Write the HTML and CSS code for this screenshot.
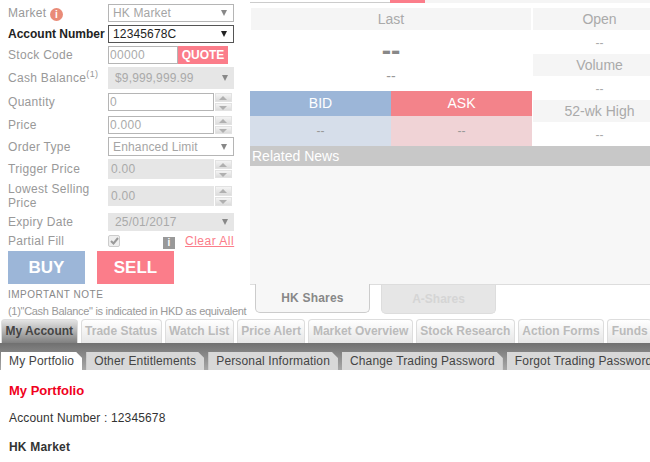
FILE: index.html
```html
<!DOCTYPE html>
<html lang="en">
<head>
  <meta charset="UTF-8"/>
  <meta name="viewport" content="width=device-width, initial-scale=1.0"/>
  <title>My Portfolio</title>
  <link rel="stylesheet" href="styles.css">
</head>
<body>
  <div class="top">
    <!-- Order form -->
    <div class="order">
      <div class="row">
        <span class="label">Market <i class="info">i</i></span>
        <div class="select"><span>HK Market</span><b class="arrow"></b></div>
      </div>
      <div class="row">
        <span class="label strong">Account Number</span>
        <div class="select active"><span>12345678C</span><b class="arrow"></b></div>
      </div>
      <div class="row">
        <span class="label">Stock Code</span>
        <input class="code" type="text" value="00000"/>
        <button class="quote">QUOTE</button>
      </div>
      <div class="row cash">
        <span class="label">Cash Balance<sup>(1)</sup></span>
        <div class="select off"><span>$9,999,999.99</span><b class="arrow"></b></div>
      </div>
      <div class="row qty">
        <span class="label">Quantity</span>
        <input class="num" type="text" value="0"/>
        <div class="spin"><b class="up"></b><b class="down"></b></div>
      </div>
      <div class="row">
        <span class="label">Price</span>
        <input class="num" type="text" value="0.000"/>
        <div class="spin"><b class="up"></b><b class="down"></b></div>
      </div>
      <div class="row type">
        <span class="label">Order Type</span>
        <div class="select"><span>Enhanced Limit</span><b class="arrow"></b></div>
      </div>
      <div class="row trigger">
        <span class="label">Trigger Price</span>
        <div class="num off"><span>0.00</span></div>
        <div class="spin"><b class="up"></b><b class="down"></b></div>
      </div>
      <div class="row lowest">
        <span class="label">Lowest Selling Price</span>
        <div class="num off"><span>0.00</span></div>
        <div class="spin"><b class="up"></b><b class="down"></b></div>
      </div>
      <div class="row expiry">
        <span class="label">Expiry Date</span>
        <div class="select off"><span>25/01/2017</span><b class="arrow"></b></div>
      </div>
      <div class="row partial">
        <span class="label">Partial Fill</span>
        <span class="check">
          <svg width="9" height="8" viewBox="0 0 9 8"><path d="M1 4l2.5 2.5L8 1" fill="none" stroke="#999" stroke-width="2"/></svg>
        </span>
        <i class="hint">i</i>
        <a class="clear" href="#">Clear All</a>
      </div>
      <div class="actions">
        <button class="buy">BUY</button>
        <button class="sell">SELL</button>
      </div>
      <div class="note-title">IMPORTANT NOTE</div>
      <div class="note">(1)"Cash Balance" is indicated in HKD as equivalent</div>
    </div>

    <!-- Quote panel -->
    <div class="panel">
      <div class="strip"><span class="strip-input"></span><span class="strip-btn"></span></div>
      <div class="quote-grid">
        <div class="main">
          <div class="head">Last</div>
          <div class="big">--</div>
          <div class="change">--</div>
          <div class="bidask">
            <div class="bid">BID</div>
            <div class="ask">ASK</div>
            <div class="bid-val">--</div>
            <div class="ask-val">--</div>
          </div>
        </div>
        <div class="side">
          <div class="head">Open</div>
          <div class="val">--</div>
          <div class="head">Volume</div>
          <div class="val">--</div>
          <div class="head">52-wk High</div>
          <div class="val">--</div>
        </div>
      </div>
      <div class="news-title">Related News</div>
      <div class="news"></div>
      <div class="share-tabs">
        <div class="share on">HK Shares</div>
        <div class="share">A-Shares</div>
      </div>
    </div>
  </div>

  <div class="tabs">
    <div class="tab on">My Account</div>
    <div class="tab">Trade Status</div>
    <div class="tab">Watch List</div>
    <div class="tab">Price Alert</div>
    <div class="tab">Market Overview</div>
    <div class="tab">Stock Research</div>
    <div class="tab">Action Forms</div>
    <div class="tab">Funds</div>
  </div>
  <div class="subtabs">
    <div class="subtab on">My Portfolio</div>
    <div class="subtab">Other Entitlements</div>
    <div class="subtab">Personal Information</div>
    <div class="subtab">Change Trading Password</div>
    <div class="subtab">Forgot Trading Password</div>
  </div>

  <div class="content">
    <h1>My Portfolio</h1>
    <p>Account Number : 12345678</p>
    <h2>HK Market</h2>
  </div>
</body>
</html>
```

FILE: styles.css
```css
* {
  box-sizing: border-box;
}

html, body {
  margin: 0;
  height: 462px;
  overflow: hidden;
}

body {
  width: 650px;
  background: #fff;
  font-family: "Liberation Sans", Arial, sans-serif;
  font-size: 12px;
  color: #999;
}

.top {
  display: flex;
  height: 319px;
}

/* Order form */
.order {
  width: 250px;
  flex-shrink: 0;
  padding: 4px 0 0 8px;
}

.row {
  display: flex;
  align-items: center;
  height: 18px;
  margin-bottom: 3px;
}

.label {
  width: 100px;
  flex-shrink: 0;
  letter-spacing: 0.3px;
  line-height: 14px;
  color: #999;
}

.label.strong {
  color: #222;
  font-weight: bold;
  letter-spacing: 0;
  white-space: nowrap;
}

.label sup {
  font-size: 9px;
  line-height: 0;
}

.info {
  display: inline-block;
  width: 13px;
  height: 13px;
  border-radius: 50%;
  background: #e98b78;
  color: #fff;
  font: bold 10px/13px "Liberation Sans", sans-serif;
  text-align: center;
  vertical-align: -1px;
}

.select {
  display: flex;
  align-items: center;
  justify-content: space-between;
  width: 126px;
  height: 100%;
  padding: 0 6px 0 4px;
  border: 1px solid #b5b5b5;
  letter-spacing: 0.15px;
  color: #a5a5a5;
}

.select.active {
  border-color: #555;
  color: #222;
}

.select.off {
  border: 0;
  background: #e6e6e6;
  color: #aaa;
  padding-left: 7px;
}

.arrow {
  width: 0;
  height: 0;
  border-left: 3.5px solid transparent;
  border-right: 3.5px solid transparent;
  border-top: 6px solid #888;
}

.active .arrow {
  border-top-color: #222;
}

input {
  height: 100%;
  padding: 0 1px;
  border: 1px solid #b5b5b5;
  border-radius: 0;
  outline: 0;
  font: 12px "Liberation Sans", Arial, sans-serif;
  letter-spacing: 0.3px;
  color: #aaa;
}

.code {
  width: 70px;
}

.quote {
  width: 50px;
  height: 100%;
  padding: 0;
  border: 0;
  background: #fb7d8a;
  color: #fff;
  font: bold 12px "Liberation Sans", Arial, sans-serif;
}

.cash {
  height: 22px;
  margin-bottom: 4px;
}

.qty {
  margin-bottom: 5px;
}

.type {
  height: 19px;
}

.trigger {
  height: 20px;
}

.lowest {
  height: 28px;
}

.lowest .num,
.lowest .spin {
  height: 20px;
}

.expiry {
  margin-bottom: 2px;
}

.num {
  width: 106px;
  height: 100%;
}

div.num {
  display: flex;
  align-items: center;
  padding-left: 3px;
  background: #e6e6e6;
  letter-spacing: 0.3px;
  color: #aaa;
}

.spin {
  display: flex;
  flex-direction: column;
  gap: 1px;
  width: 17px;
  height: 18px;
  margin-left: 1px;
}

.spin b {
  position: relative;
  flex: 1;
  background: linear-gradient(#f4f4f4, #dcdcdc);
  border: 1px solid #e2e2e2;
}

.spin b::after {
  content: "";
  position: absolute;
  left: 3px;
  top: 2px;
  border-left: 4.5px solid transparent;
  border-right: 4.5px solid transparent;
}

.spin .up::after {
  border-bottom: 4px solid #b0b0b0;
}

.spin .down::after {
  border-top: 4px solid #b0b0b0;
}

.partial {
  height: 16px;
  margin-bottom: 2px;
}

.check {
  display: flex;
  align-items: center;
  justify-content: center;
  width: 12px;
  height: 12px;
  border: 1px solid #ccc;
  border-radius: 2px;
  background: #eee;
}

.hint {
  width: 12px;
  height: 12px;
  margin: 4px 0 0 43px;
  background: #999;
  color: #fff;
  font: bold 10px/12px "Liberation Sans", sans-serif;
  text-align: center;
}

.clear {
  margin-left: 10px;
  color: #fb7d8a;
  letter-spacing: 0.5px;
}

.actions {
  display: flex;
  gap: 12px;
}

.actions button {
  width: 77px;
  height: 33px;
  padding: 0;
  border: 0;
  color: #fff;
  font: bold 17px "Liberation Sans", Arial, sans-serif;
}

.buy {
  background: #9cb6d8;
}

.sell {
  background: #fb7d8a;
}

.note-title {
  margin-top: 5px;
  font-size: 10px;
  line-height: 12px;
  letter-spacing: 0.5px;
  color: #888;
}

.note {
  margin-top: 4px;
  font-size: 11px;
  line-height: 13px;
  letter-spacing: -0.3px;
  white-space: nowrap;
  color: #999;
}

/* Quote panel */
.panel {
  width: 400px;
  flex-shrink: 0;
  display: flex;
  flex-direction: column;
}

.strip {
  display: flex;
  height: 3px;
  background: #f5f5f5;
}

.strip-input {
  width: 140px;
  background: #fff;
  border-bottom: 1px solid #ccc;
}

.strip-btn {
  width: 35px;
  background: #fb7d8a;
}

.quote-grid {
  display: flex;
  padding-top: 5px;
  height: 143px;
}

.main {
  width: 282px;
  flex-shrink: 0;
  display: flex;
  flex-direction: column;
  text-align: center;
}

.main > .head {
  margin: 0 1px;
}

.head {
  height: 22px;
  background: #f5f5f5;
  font-size: 14px;
  line-height: 22px;
  text-align: center;
  color: #aaa;
}

.big {
  height: 30px;
  margin-top: 6px;
  font-size: 28px;
  font-weight: bold;
  line-height: 30px;
  color: #888;
}

.change {
  height: 16px;
  margin-top: 2px;
  font-size: 14px;
  line-height: 16px;
  color: #999;
}

.bidask {
  display: grid;
  grid-template-columns: 141px 141px;
  grid-template-rows: 25px 30px;
  margin-top: 7px;
  line-height: 25px;
  font-size: 14px;
  color: #fff;
}

.bid {
  background: #9cb6d8;
}

.ask {
  background: #f3838a;
}

.bid-val,
.ask-val {
  font-size: 12px;
  line-height: 30px;
  color: #999;
}

.bid-val {
  background: #d6deea;
}

.ask-val {
  background: #f0d3d6;
}

.side {
  width: 133px;
  flex-shrink: 0;
  margin-left: 1px;
  text-align: center;
}

.side .val {
  height: 24px;
  font-size: 12px;
  line-height: 27px;
  color: #aaa;
}

.news-title {
  height: 20px;
  padding-left: 2px;
  background: #c8c8c8;
  color: #fff;
  font-size: 14px;
  line-height: 20px;
}

.news {
  height: 118px;
  background: #f7f7f7;
}

.share-tabs {
  display: flex;
  gap: 11px;
  padding-left: 5px;
  border-top: 1px solid #ddd;
}

.share {
  width: 115px;
  height: 29px;
  border: 1px solid #ddd;
  border-top: 0;
  border-radius: 0 0 5px 5px;
  background: #e6e6e6;
  font-weight: bold;
  line-height: 28px;
  text-align: center;
  color: #d5d5d5;
}

.share.on {
  height: 29px;
  margin-top: -1px;
  border-color: #ccc;
  background: #f7f7f7;
  letter-spacing: 0.2px;
  color: #888;
}

/* Main tabs */
.tabs {
  display: flex;
  gap: 3px;
  height: 24px;
  padding-left: 1px;
  white-space: nowrap;
}

.tab {
  flex-shrink: 0;
  padding: 0 3.5px;
  border: 1px solid #ddd;
  border-bottom: 0;
  border-radius: 4px 4px 0 0;
  background: linear-gradient(#fff, #e6e6e6);
  font-weight: bold;
  line-height: 23px;
  color: #bbb;
}

.tab.on {
  background: linear-gradient(#e4e4e4, #808080);
  color: #444;
}

.subtabs {
  display: flex;
  gap: 4px;
  height: 27px;
  padding: 9px 0 0 1px;
  background: linear-gradient(#707070, #a8a8a8);
  white-space: nowrap;
}

.subtab {
  flex-shrink: 0;
  height: 18px;
  padding: 0 8px;
  background: #d8d8d8;
  line-height: 18px;
  letter-spacing: 0.15px;
  color: #444;
  clip-path: polygon(0 0, calc(100% - 6px) 0, 100% 6px, 100% 100%, 0 100%);
}

.subtab.on {
  background: #fff;
}

/* Page content */
.content {
  padding: 0 9px;
  color: #333;
}

.content h1 {
  margin: 13px 0 0;
  font-size: 13px;
  line-height: 15px;
  color: #f00020;
}

.content p {
  margin: 13px 0 0;
  line-height: 15px;
  letter-spacing: 0.15px;
}

.content h2 {
  margin: 14px 0 0;
  font-size: 12px;
  line-height: 15px;
  letter-spacing: 0.2px;
}
```
